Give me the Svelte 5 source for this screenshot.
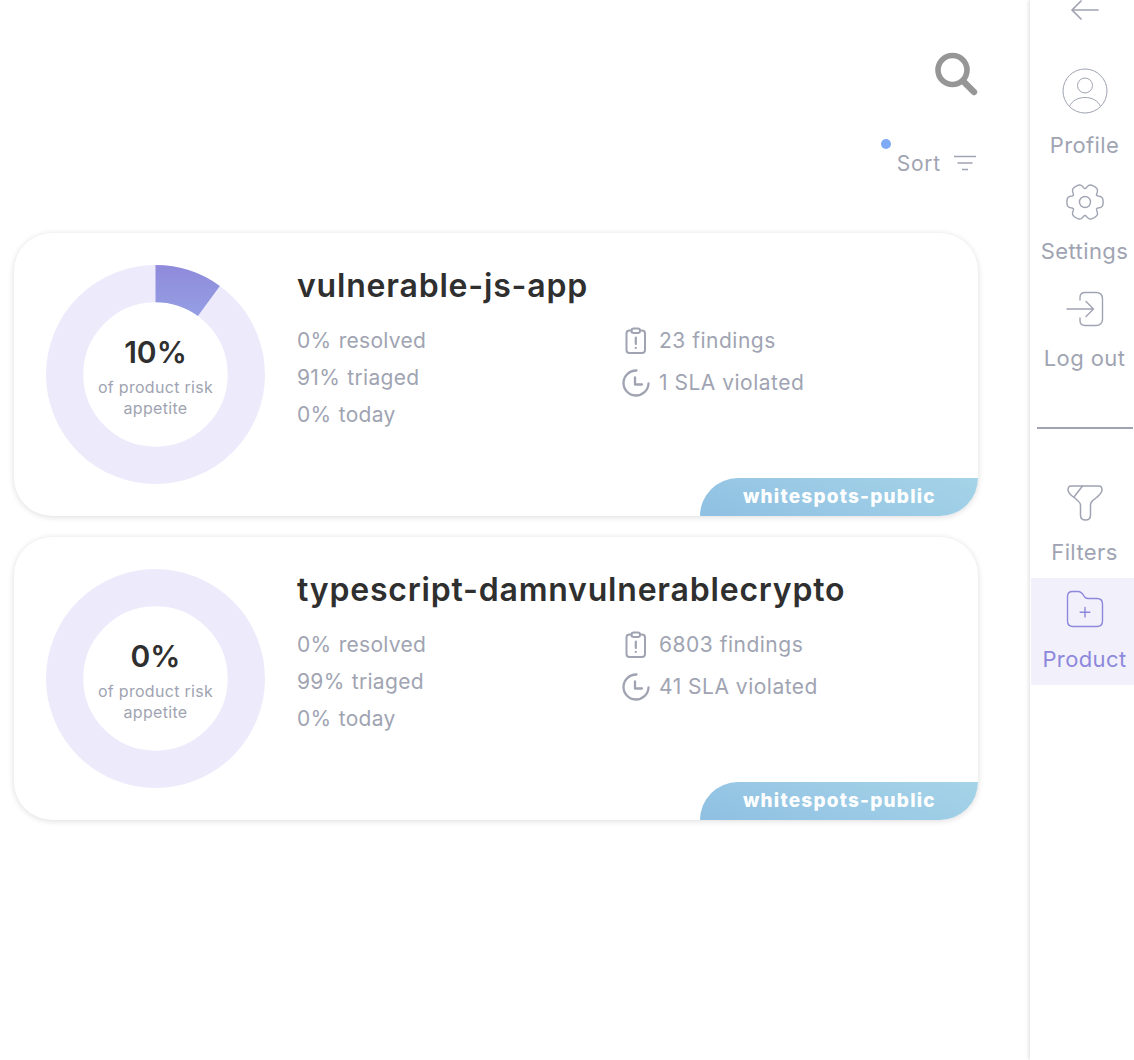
<script>
  const products = [
    { name: 'vulnerable-js-app', risk: 10, resolved: 0, triaged: 91, today: 0, findings: 23, sla: 1, org: 'whitespots-public' },
    { name: 'typescript-damnvulnerablecrypto', risk: 0, resolved: 0, triaged: 99, today: 0, findings: 6803, sla: 41, org: 'whitespots-public' }
  ];

  // cog outline: six flat-topped lobes, with a notch straight up and straight down
  function cog(cx, cy) {
    const pts = [];
    for (let i = 0; i < 144; i++) {
      const a = (i / 144) * Math.PI * 2;
      const t = (Math.cos(6 * a) + 1) / 2;
      const rad = 13.4 + 4.7 * (1 - Math.pow(1 - t, 3));
      pts.push((cx + rad * Math.cos(a)).toFixed(2) + ' ' + (cy + rad * Math.sin(a)).toFixed(2));
    }
    return 'M' + pts.join('L') + 'Z';
  }
</script>

<div class="page">
  <main class="content">
    <div class="search-row">
      <svg class="search" width="46" height="46" viewBox="0 0 46 46" fill="none" stroke="#969696" stroke-linecap="round">
        <circle cx="19.5" cy="19" r="14.5" stroke-width="5.6" />
        <path d="M30 30 L41 41" stroke-width="6.4" />
      </svg>
    </div>

    <div class="sort-row">
      <span class="dot"></span>
      <span class="sort-label">Sort</span>
      <svg width="24" height="16" viewBox="0 0 24 16" fill="none" stroke="#a0a4b2" stroke-width="1.4">
        <path d="M1 1.5H23M4.5 8H19.5M9 14.5H15" />
      </svg>
    </div>

    <div class="cards">
      {#each products as p}
        <article class="card">
          <div class="donut">
            <svg width="219" height="219" viewBox="0 0 219 219">
              <defs>
                <linearGradient id="seg-{p.risk}" gradientUnits="userSpaceOnUse" x1="0" y1="0" x2="0" y2="56">
                  <stop offset="0" stop-color="#8f8adb" />
                  <stop offset="1" stop-color="#95a1e4" />
                </linearGradient>
              </defs>
              <circle cx="109.5" cy="109.5" r="90.85" fill="none" stroke="#edebfb" stroke-width="37.3" />
              {#if p.risk > 0}
                <path
                  d="M109.5 18.65 A90.85 90.85 0 0 1 162.9 36"
                  fill="none"
                  stroke="url(#seg-{p.risk})"
                  stroke-width="37.3"
                />
              {/if}
            </svg>
            <div class="donut-text">
              <div class="risk">{p.risk}%</div>
              <div class="risk-note">of product risk<br />appetite</div>
            </div>
          </div>

          <div class="info">
            <h2>{p.name}</h2>
            <div class="stats">
              <ul class="progress">
                <li><span>{p.resolved}%</span> resolved</li>
                <li><span>{p.triaged}%</span> triaged</li>
                <li><span>{p.today}%</span> today</li>
              </ul>
              <ul class="counts">
                <li>
                  <svg width="28" height="28" viewBox="0 0 28 28" fill="none" stroke="#a0a4b2" stroke-width="2" stroke-linecap="round" stroke-linejoin="round">
                    <path d="M9.5 3.5H7.5C5.8 3.5 4.5 4.8 4.5 6.5V23C4.5 24.7 5.8 26 7.5 26H20C21.7 26 23 24.7 23 23V6.5C23 4.8 21.7 3.5 20 3.5H18" />
                    <rect x="9.5" y="1.5" width="8.5" height="4.5" rx="2.2" />
                    <path d="M13.8 10.5V17M13.8 20.8V21" stroke-width="2.2" />
                  </svg>
                  {p.findings} findings
                </li>
                <li>
                  <svg width="28" height="28" viewBox="0 0 28 28" fill="none" stroke="#a0a4b2" stroke-width="2.3" stroke-linecap="round" stroke-linejoin="round">
                    <path d="M14.5 1.5A12.5 12.5 0 1 0 26.5 14.5" />
                    <path d="M13 8.5V15.5H20" />
                  </svg>
                  {p.sla} SLA violated
                </li>
              </ul>
            </div>
          </div>

          <div class="org">{p.org}</div>
        </article>
      {/each}
    </div>
  </main>

  <aside class="sidebar">
    <svg class="back" width="30" height="20" viewBox="0 0 30 20" fill="none" stroke="#a0a4b2" stroke-width="1.7" stroke-linecap="round" stroke-linejoin="round">
      <path d="M2 10H28M11 1L2 10L11 19" />
    </svg>

    <a class="item profile">
      <svg width="46" height="46" viewBox="0 0 46 46" fill="none" stroke="#a0a4b2" stroke-width="1">
        <circle cx="23" cy="23" r="22" />
        <circle cx="23" cy="17.5" r="7.5" />
        <path d="M7.5 38.5C10 32.5 16 29.5 23 29.5C30 29.5 36 32.5 38.5 38.5" />
      </svg>
      <span>Profile</span>
    </a>
    <a class="item">
      <svg width="38" height="36" viewBox="0 0 38 36" fill="none" stroke="#a0a4b2" stroke-width="1.4" stroke-linejoin="round">
        <path d={cog(19, 18)} />
        <circle cx="19" cy="18" r="5.5" />
      </svg>
      <span>Settings</span>
    </a>
    <a class="item">
      <svg width="38" height="36" viewBox="0 0 38 36" fill="none" stroke="#a0a4b2" stroke-width="1.4" stroke-linecap="round" stroke-linejoin="round">
        <path d="M14 9V6.5C14 3.5 16 1.5 19 1.5H30C34 1.5 36.5 4 36.5 8V28C36.5 32 34 34.5 30 34.5H19C16 34.5 14 32.5 14 29.5V27" />
        <path d="M1 18H27.5M20 10.5L27.5 18L20 25.5" />
      </svg>
      <span>Log out</span>
    </a>

    <hr />

    <a class="item">
      <svg width="36" height="36" viewBox="0 0 36 36" fill="none" stroke="#a0a4b2" stroke-width="1.5" stroke-linecap="round" stroke-linejoin="round">
        <path d="M4 1H32C34 1 35 2.5 35 5C35 8 32.5 10 29.5 12.5C25.5 15.5 23.5 17 23.5 20V30C23.5 33 21.5 35 18.5 35C15.5 35 13.5 33 13.5 30V20C13.5 18 12 16.5 9 14C5 11 1 8.5 1 5C1 2.5 2 1 4 1Z" />
        <path d="M15.5 1L7 12" />
      </svg>
      <span>Filters</span>
    </a>
    <a class="item active">
      <svg width="38" height="38" viewBox="0 0 38 38" fill="none" stroke="#8d88dc" stroke-width="1.4" stroke-linecap="round" stroke-linejoin="round">
        <path d="M1.5 6.5C1.5 3.5 3.5 1.5 6.5 1.5H12C15 1.5 16.5 3.5 18 6C19 8 20 8.5 22 8.5H31C34.5 8.5 36.5 10.5 36.5 14V31C36.5 34.5 34.5 36.5 31 36.5H7C3.5 36.5 1.5 34.5 1.5 31Z" />
        <path d="M19 17.5V27M14.2 22.2H23.8" />
      </svg>
      <span>Product</span>
    </a>
  </aside>
</div>

<style>
  :global(body) {
    margin: 0;
    background: #fff;
    font-family: Inter, "Liberation Sans", sans-serif;
  }

  .page {
    display: flex;
    width: 1134px;
    height: 1060px;
    overflow: hidden;
  }

  .content {
    width: 1030px;
    flex-shrink: 0;
    box-sizing: border-box;
    padding: 51px 52px 0 14px;
  }

  .search-row {
    display: flex;
    justify-content: flex-end;
    margin-right: -1px;
  }

  .sort-row {
    position: relative;
    display: flex;
    justify-content: flex-end;
    align-items: center;
    gap: 12px;
    height: 24px;
    margin-top: 54px;
    padding-right: 1px;
  }

  .dot {
    position: absolute;
    right: 87px;
    top: -12px;
    width: 10px;
    height: 10px;
    border-radius: 50%;
    background: #7faaf8;
  }

  .sort-label {
    font-size: 21px;
    letter-spacing: 0.8px;
    color: #a0a4b2;
  }

  .cards {
    display: flex;
    flex-direction: column;
    gap: 21px;
    margin-top: 58px;
  }

  .card {
    position: relative;
    display: flex;
    height: 283px;
    box-sizing: border-box;
    padding: 32px;
    border-radius: 38px;
    background: #fff;
    box-shadow: 0 1px 6px rgba(0, 0, 0, 0.14);
    overflow: hidden;
  }

  .donut {
    position: relative;
    width: 219px;
    height: 219px;
    flex-shrink: 0;
  }

  .donut svg {
    display: block;
  }

  .donut-text {
    position: absolute;
    inset: 0;
    box-sizing: border-box;
    padding-top: 3px;
    display: flex;
    flex-direction: column;
    align-items: center;
    justify-content: center;
    text-align: center;
  }

  .risk {
    font-size: 30px;
    font-weight: 600;
    line-height: 36px;
    color: #2f2f2f;
  }

  .risk-note {
    font-size: 16px;
    letter-spacing: 0.3px;
    line-height: 21px;
    color: #a0a4b2;
    margin-top: 7px;
  }

  .info {
    margin-left: 32px;
    margin-top: -1px;
    flex: 1;
  }

  h2 {
    margin: 0;
    font-size: 32px;
    font-weight: 600;
    letter-spacing: 0.8px;
    line-height: 44px;
    color: #2f2f2f;
  }

  .stats {
    display: flex;
    margin-top: 14px;
  }

  ul {
    list-style: none;
    margin: 0;
    padding: 0;
  }

  .progress {
    width: 325px;
    font-size: 21px;
    letter-spacing: 0.3px;
    line-height: 37px;
    color: #a0a4b2;
  }

  .progress span {
    margin-right: 1px;
  }

  .counts {
    font-size: 21px;
    letter-spacing: 0.5px;
    color: #a0a4b2;
  }

  .counts li {
    display: flex;
    align-items: center;
    gap: 9px;
    height: 37px;
    line-height: 37px;
    margin-bottom: 5px;
  }

  .counts svg {
    flex-shrink: 0;
  }

  .org {
    position: absolute;
    right: 0;
    bottom: 0;
    width: 278px;
    height: 38px;
    box-sizing: border-box;
    padding-left: 43px;
    border-radius: 38px 0 0 0;
    background: linear-gradient(20deg, #8fc0e2, #a5d4e8);
    color: #fff;
    font-size: 19px;
    font-weight: 800;
    letter-spacing: 1.2px;
    line-height: 38px;
  }

  .sidebar {
    position: relative;
    width: 104px;
    flex-shrink: 0;
    box-sizing: border-box;
    padding-top: 64px;
    display: flex;
    flex-direction: column;
    box-shadow: -1px 0 4px rgba(0, 0, 0, 0.14);
  }

  .back {
    position: absolute;
    left: 40px;
    top: 0;
  }

  .item {
    display: flex;
    flex-direction: column;
    align-items: center;
    justify-content: flex-end;
    height: 106.5px;
    box-sizing: border-box;
    padding: 0 0 13px 5px;
    gap: 18px;
    color: #a0a4b2;
    font-size: 22px;
    letter-spacing: 0.4px;
    line-height: 26px;
  }

  .item svg {
    display: block;
    flex-shrink: 0;
  }

  .active {
    background: #f2f1fb;
    color: #8d88dc;
    margin-left: 1px;
    padding-left: 4px;
  }

  hr {
    width: 96px;
    margin: 43px 0 43px 7px;
    border: 0;
    border-top: 2px solid #a0a4b2;
  }
</style>
